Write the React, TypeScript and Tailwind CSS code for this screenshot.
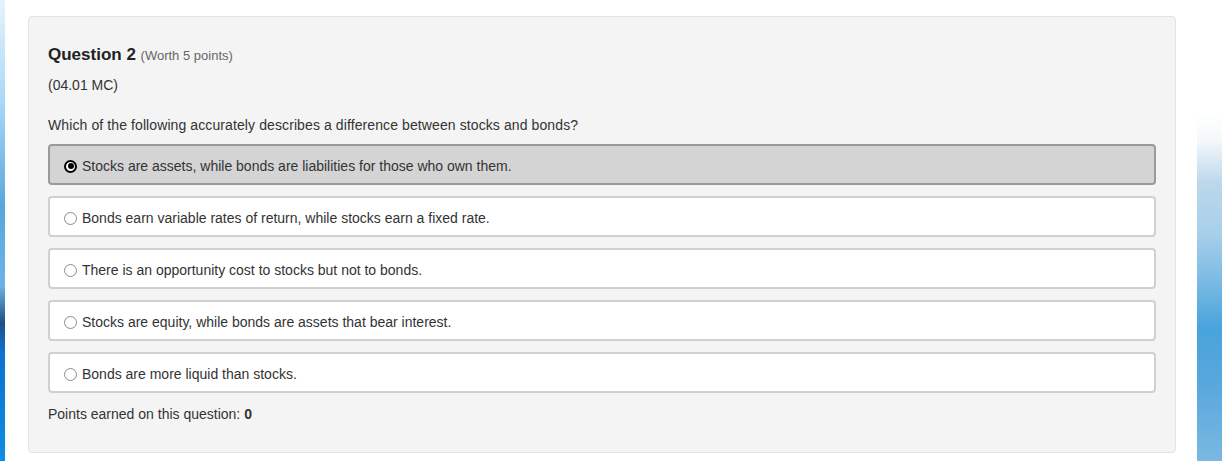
const options = [
  'Stocks are assets, while bonds are liabilities for those who own them.',
  'Bonds earn variable rates of return, while stocks earn a fixed rate.',
  'There is an opportunity cost to stocks but not to bonds.',
  'Stocks are equity, while bonds are assets that bear interest.',
  'Bonds are more liquid than stocks.',
];

function Radio({ checked }: { checked: boolean }) {
  if (checked) {
    return (
      <span className="flex h-[13px] w-[13px] shrink-0 items-center justify-center rounded-full border-2 border-black bg-white">
        <span className="h-[6px] w-[6px] rounded-full bg-black" />
      </span>
    );
  }
  return <span className="h-[13px] w-[13px] shrink-0 rounded-full border border-[#8a8a8a] bg-white" />;
}

export default function App() {
  const selected = 0;
  return (
    <div className="flex h-[461px] w-[1222px] bg-white font-['Liberation_Sans',Arial,sans-serif] text-[#333]">
      <div className="w-[5px] shrink-0 bg-[linear-gradient(180deg,#e6f3fc_0%,#a9d8f8_22%,#58a6de_45%,#6cb4e8_62%,#1f4f86_70%,#0e6fcf_76%,#0a8fe3_100%)]" />

      <main className="flex-1 pl-[23px] pt-[16px]">
        <section className="flex h-[437px] w-[1148px] flex-col rounded-[4px] border border-[#e3e3e3] bg-[#f4f4f4] px-[19px] pt-[28px]">
          <h2 className="text-[17px] leading-[20px] font-bold text-[#222]">
            Question 2 <span className="text-[13px] font-normal text-[#666]">(Worth 5 points)</span>
          </h2>
          <p className="mt-[9px] text-[14px] leading-[20px]">(04.01 MC)</p>
          <p className="mt-[20px] text-[14px] leading-[20px] tracking-[0.1px]">
            Which of the following accurately describes a difference between stocks and bonds?
          </p>

          <div className="mt-[9px] flex flex-col gap-[11px]">
            {options.map((text, i) => (
              <label
                key={text}
                className={
                  i === selected
                    ? 'flex h-[41px] items-center gap-[5px] rounded-[4px] border-2 border-[#9a9a9a] bg-[#d4d4d4] pl-[14px] pt-[3px] text-[14px]'
                    : 'flex h-[41px] items-center gap-[5px] rounded-[4px] border-2 border-[#d0d0d0] bg-white pl-[14px] pt-[3px] text-[14px]'
                }
              >
                <Radio checked={i === selected} />
                <span>{text}</span>
              </label>
            ))}
          </div>

          <p className="mt-[11px] text-[14px] leading-[20px]">
            Points earned on this question: <b>0</b>
          </p>
        </section>
      </main>

      <div className="flex w-[25px] shrink-0 flex-col pt-[113px]">
        <div className="flex-1 bg-[linear-gradient(180deg,#ffffff_0%,#f4f8fb_8%,#bcd8eb_20%,#a7cfea_35%,#7cbbe4_48%,#48a3dc_62%,#58a8dc_78%,#7ab9e3_100%)]" />
      </div>
    </div>
  );
}
